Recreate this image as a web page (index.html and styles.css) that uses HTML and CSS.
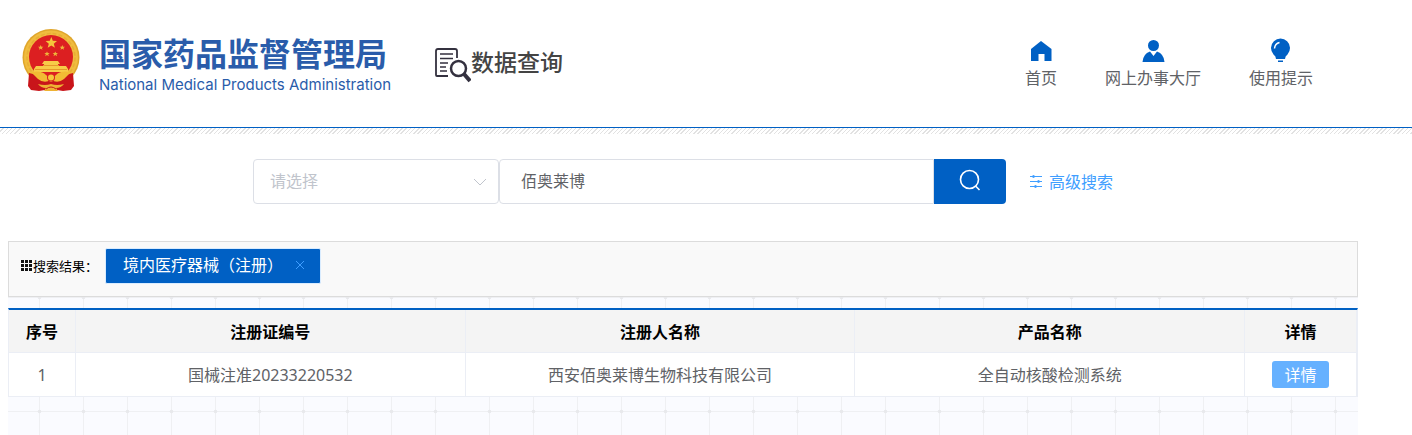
FILE: index.html
```html
<!DOCTYPE html>
<html lang="zh-CN">
<head>
<meta charset="utf-8">
<title>国家药品监督管理局 - 数据查询</title>
<link rel="stylesheet" href="styles.css">
</head>
<body>
<header class="header">
  <a class="brand" href="#">
    <svg class="emblem" viewBox="0 0 58 64" aria-hidden="true">
      <circle cx="29" cy="28.500" r="28.500" fill="#e0a62c"/>
      <circle cx="29" cy="28.500" r="27" fill="#f0bc3e"/>
      <circle cx="29" cy="28.500" r="24" fill="none" stroke="#e8ae35" stroke-width="1.500" stroke-dasharray="4 2"/>
      <circle cx="29" cy="28" r="22" fill="#dc1f21"/>
      <path fill="#f5c63c" d="m29.300 8 1.500 3.800 4.200.2-3.200 2.700 1.100 4.100-3.600-2.300-3.600 2.300 1.100-4.100-3.200-2.700 4.200-.2z"/>
      <path fill="#eeb43a" d="m18.700 16 .8 1.700h1.900l-1.500 1.200.6 1.900-1.800-1.100-1.800 1.100.6-1.900-1.500-1.200h1.900zM40.300 16l.8 1.700H43l-1.500 1.200.6 1.900-1.800-1.100-1.800 1.100.6-1.900-1.500-1.200h1.900zM25 22.400l.8 1.700h1.900l-1.500 1.200.6 1.900L25 26.100l-1.800 1.100.6-1.900-1.500-1.200h1.900zM33.300 22.400l.8 1.700H36l-1.500 1.200.6 1.900-1.800-1.100-1.800 1.100.6-1.900-1.500-1.200h1.900z"/>
      <path fill="#f7cc48" d="M22 32h14l2 3h-2v2h8l2 3v3H12v-3l2-3h8v-2h-2z"/>
      <path stroke="#e69a2a" stroke-width="1" d="M21 36.500H37M13 40.500H45"/>
      <path fill="#c9151a" d="M7 44 15 46 29 53 43 46 51 44 52 57 49 61 41 62 29 60 17 62 9 61 6 57Z"/>
      <path fill="#f2bb34" d="M9 43Q20 41 24 46L29 50 34 46Q38 41 49 43L42 50Q36 55 29 51 22 55 16 50Z"/>
      <circle cx="29" cy="48.500" r="4" fill="#dc1f21"/>
      <circle cx="29" cy="48.500" r="3" fill="#f5c63c"/>
      <path fill="#eeb234" d="M16 55q7 2 13 0 6 2 13 0-3 4-8 4l2 3H22l2-3q-5 0-8-4z"/>
      <path fill="none" stroke="#c9151a" stroke-width="1" d="M24 60q5-4 10 0"/>
    </svg>
    <span class="brand-names">
      <span class="brand-cn">国家药品监督管理局</span>
      <span class="brand-en">National Medical Products Administration</span>
    </span>
  </a>
  <div class="section-title">
    <svg class="section-icon" viewBox="0 0 36 35" fill="none" stroke="#34313f" aria-hidden="true">
      <path stroke-width="1.800" d="M13 28H2Q1 28 1 27V3Q1 1 3 1H20Q22 1 22 3V10"/>
      <path stroke-width="1.500" d="M5 6H18M5 10.500H18M5 15H13M5 19H11M5 23H12"/>
      <circle cx="23.500" cy="20.500" r="7.500" stroke-width="2.500"/>
      <path stroke-width="4" d="m29 26 6 7"/>
    </svg>
    <span>数据查询</span>
  </div>
  <nav class="nav">
    <a class="nav-item" href="#">
      <svg class="nav-icon" viewBox="0 0 24 24" aria-hidden="true"><path d="M12 3 22.500 11V23H15.500V16H9.500V23H2V11Z"/></svg>
      <span>首页</span>
    </a>
    <a class="nav-item" href="#">
      <svg class="nav-icon" viewBox="0 0 24 24" aria-hidden="true"><circle cx="12.500" cy="7.500" r="5.500"/><path d="M1.500 24Q2 16 9 13.500L12.500 18 16 13.500Q23 16 23.500 24Z"/></svg>
      <span>网上办事大厅</span>
    </a>
    <a class="nav-item" href="#">
      <svg class="nav-icon" viewBox="0 0 24 24" aria-hidden="true"><path d="M7 21Q7 18 4.500 16.500A9.500 9.500 0 1 1 18.500 16.500Q16 18 16 21ZM9 22.500h5V24H9Z"/><path class="shine" d="M5.500 10.500Q6 5.500 10.500 4.500"/></svg>
      <span>使用提示</span>
    </a>
  </nav>
</header>
<div class="hatch"></div>
<main class="main">
  <form class="search">
    <div class="select-box">
      <select class="category" aria-label="数据类别"><option>请选择</option></select>
      <svg class="chevron" viewBox="0 0 14 8" aria-hidden="true"><path d="m1 1 6 6 6-6"/></svg>
    </div>
    <input class="keyword" type="text" aria-label="关键词" value="佰奥莱博">
    <button class="search-btn" type="button" aria-label="搜索">
      <svg viewBox="0 0 22 22" aria-hidden="true"><circle cx="10.500" cy="10.500" r="9"/><path d="m16.500 17 4 4"/></svg>
    </button>
    <a class="advanced" href="#">
      <svg viewBox="0 0 14 14" aria-hidden="true"><path d="M1 1.500H13M1 6.500H13M1 11.500H13"/><circle cx="4.500" cy="1.500" r="1"/><circle cx="9.500" cy="6.500" r="1"/><circle cx="6.500" cy="11.500" r="1"/></svg>
      <span>高级搜索</span>
    </a>
  </form>
  <section class="results">
    <div class="filter">
      <svg class="grid-icon" viewBox="0 0 12 11" aria-hidden="true"><path d="M0 0h3v3H0zM4 0h3v3H4zM8 0h3v3H8zM0 4h3v3H0zM4 4h3v3H4zM8 4h3v3H8zM0 8h3v3H0zM4 8h3v3H4zM8 8h3v3H8z"/></svg>
      <span class="filter-label">搜索结果：</span>
      <span class="tag">境内医疗器械（注册）
        <button class="tag-close" type="button" aria-label="移除"><svg viewBox="0 0 10 10" aria-hidden="true"><path d="m1 1 8 8M9 1 1 9"/></svg></button>
      </span>
    </div>
    <table class="table">
      <colgroup><col class="col-index"><col><col><col><col class="col-action"></colgroup>
      <thead><tr><th>序号</th><th>注册证编号</th><th>注册人名称</th><th>产品名称</th><th>详情</th></tr></thead>
      <tbody><tr><td>1</td><td>国械注准20233220532</td><td>西安佰奥莱博生物科技有限公司</td><td>全自动核酸检测系统</td><td><button class="detail" type="button">详情</button></td></tr></tbody>
    </table>
  </section>
</main>
</body>
</html>
```

FILE: styles.css
```css
* { box-sizing: border-box; }

html { display: flex; flex-direction: column; min-height: 100%; }

body {
  margin: 0;
  flex: 1;
  display: flex;
  flex-direction: column;
  color: #606266;
  background: #fff;
  font: 16px/24px "Noto Sans", "Noto Sans CJK SC", sans-serif;
}

button, input, select { font: inherit; }
a { color: inherit; text-decoration: none; }
svg { display: block; }

.header {
  display: flex;
  align-items: flex-start;
  min-height: 128px;
  padding: 29px 99px 0 22px;
  border-bottom: 1px solid #0060c4;
}

.brand { display: flex; gap: 19px; color: #2a5caa; }
.emblem { width: 58px; height: 64px; }
.brand-names { display: flex; flex-direction: column; width: 288px; padding-top: 4px; white-space: nowrap; }
.brand-cn { font-size: 32px; line-height: 41px; font-weight: 700; }
.brand-en { font: 15px/22px Inter, sans-serif; }

.section-title {
  display: flex;
  align-items: flex-start;
  margin: 15px 0 0 48px;
  color: #444;
  font-size: 23px;
  line-height: 36px;
  font-weight: 500;
}
.section-icon { width: 36px; height: 35px; margin-top: 4px; }

.nav { display: flex; gap: 48px; margin-left: auto; padding-top: 9px; }
.nav-item { display: flex; flex-direction: column; align-items: center; gap: 4px; line-height: 24px; }
.nav-icon { width: 24px; height: 24px; fill: #0060c4; }
.shine { fill: none; stroke: #fff; stroke-width: 1.5; }

.hatch {
  height: 6px;
  background: repeating-linear-gradient(135deg, #fff 0 2px, #e2e2e2 2px 3px);
}

.main { flex: 1; display: flex; flex-direction: column; margin: 0 54px 0 8px; }

.search { display: flex; align-items: center; justify-content: center; padding: 25px 0 37px; }
.select-box { display: grid; align-items: center; width: 246px; }
.category {
  grid-area: 1 / 1;
  appearance: none;
  width: 100%;
  height: 45px;
  padding: 0 16px 2px;
  border: 1px solid #dcdfe6;
  border-radius: 4px;
  background: #fff;
  color: #c0c4cc;
}
.chevron { grid-area: 1 / 1; justify-self: end; width: 14px; height: 8px; margin-right: 12px; fill: none; stroke: #c0c4cc; pointer-events: none; }
.keyword {
  flex: 0 1 435px;
  min-width: 0;
  height: 45px;
  padding: 0 21px 3px;
  border: 1px solid #dcdfe6;
  border-radius: 4px 0 0 4px;
  color: #606266;
}
.search-btn {
  display: grid;
  place-items: center;
  width: 72px;
  height: 45px;
  padding: 0 0 3px;
  border: 0;
  border-radius: 0 4px 4px 0;
  background: #0060c4;
}
.search-btn svg { width: 22px; height: 22px; fill: none; stroke: #fff; stroke-width: 1.6; }
.advanced { display: flex; align-items: center; gap: 6px; margin-left: 23px; color: #409eff; }
.advanced svg { width: 14px; height: 14px; fill: #409eff; stroke: #409eff; }

.results {
  flex: 1;
  background: #fafbff url("data:image/svg+xml,%3Csvg xmlns='http://www.w3.org/2000/svg' width='450' height='114'%3E%3Cdefs%3E%3Cpattern id='p' width='44' height='114' patternUnits='userSpaceOnUse'%3E%3Cpath d='M31.500 0V114M0 56.500H44' stroke='%23eff0f3'/%3E%3Ccircle cx='31.500' cy='56.500' r='1.800' fill='%23e8e9ec'/%3E%3C/pattern%3E%3C/defs%3E%3Cpath d='M0 0H450V114H0Z' fill='url(%23p)'/%3E%3C/svg%3E");
}
.filter {
  display: flex;
  align-items: flex-start;
  min-height: 56px;
  margin-bottom: 11px;
  padding: 6px 12px;
  border: 1px solid #dcdcdc;
  background: #f9f9f9;
}
.grid-icon { width: 12px; height: 11px; margin-top: 12px; fill: #111; }
.filter-label { padding-top: 6px; color: #000; font-size: 13px; }
.tag {
  display: flex;
  align-items: center;
  gap: 12px;
  height: 36px;
  margin-left: 7px;
  padding: 0 15px 2px 17px;
  border: 1px solid #d9ecff;
  border-radius: 2px;
  background: #0060c4;
  color: #fff;
}
.tag-close { padding: 0; border: 0; background: none; }
.tag-close svg { width: 10px; height: 10px; fill: none; stroke: #409eff; }

.table {
  width: 100%;
  table-layout: fixed;
  border-collapse: separate;
  border-spacing: 0;
  border-top: 2px solid #0060c4;
  border-left: 1px solid #ebeef5;
  border-right: 1px solid #ebeef5;
  background: #fff;
  text-align: center;
}
.col-index { width: 67px; }
.col-action { width: 112px; }
.table th, .table td { height: 44px; padding: 0; border: solid #ebeef5; border-width: 0 1px 1px 0; }
.table th { height: 43px; padding-top: 2px; background: #f4f4f4; color: #000; font-weight: 700; }
.detail {
  height: 27px;
  padding: 0 12px;
  border: 0;
  border-radius: 3px;
  background: #66b1ff;
  color: #fff;
  vertical-align: middle;
}
```
